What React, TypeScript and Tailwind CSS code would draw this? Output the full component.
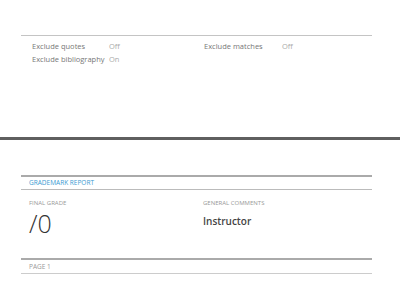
export default function App() {
  return (
    <div className="w-[400px] h-[284px] overflow-hidden bg-white font-['Open_Sans',sans-serif]">
      <div className="h-[137px] pt-[35px]">
        <div className="ml-[21px] w-[351px] border-t border-[#c4c4c4] pt-[4px] pl-[11px]">
          <div className="grid grid-cols-[77px_95px_78px_1fr] text-[7.5px] leading-[13px] whitespace-nowrap">
            <span className="text-[#777]">Exclude quotes</span>
            <span className="text-[#aaa]">Off</span>
            <span className="text-[#777]">Exclude matches</span>
            <span className="text-[#aaa]">Off</span>
            <span className="text-[#777]">Exclude bibliography</span>
            <span className="text-[#aaa]">On</span>
          </div>
        </div>
      </div>
      <div className="h-[3px] bg-[#5f5f5f]" />
      <div className="pt-[35px] ml-[21px] w-[351px]">
        <div className="border-t-2 border-[#aaa] border-b border-b-[#bbb] h-[15px] pl-[8px] flex items-center">
          <span className="text-[6.5px] text-[#3a9ad1] uppercase">Grademark Report</span>
        </div>
        <div className="grid grid-cols-[174px_1fr] pl-[8px] pt-[9px] h-[68px]">
          <div>
            <div className="text-[6px] text-[#999] uppercase leading-[8px]">Final Grade</div>
            <div className="text-[25px] font-light text-[#333] leading-[24px] mt-[4px]">/0</div>
          </div>
          <div>
            <div className="text-[6px] text-[#999] uppercase leading-[8px]">General Comments</div>
            <div className="text-[10px] font-semibold text-[#444] mt-[7px] leading-[14px]">Instructor</div>
          </div>
        </div>
        <div className="border-t-2 border-[#aaa] border-b border-b-[#ccc] h-[16px] pl-[8px] flex items-center">
          <span className="text-[6.5px] text-[#999] uppercase">Page 1</span>
        </div>
      </div>
    </div>
  )
}
